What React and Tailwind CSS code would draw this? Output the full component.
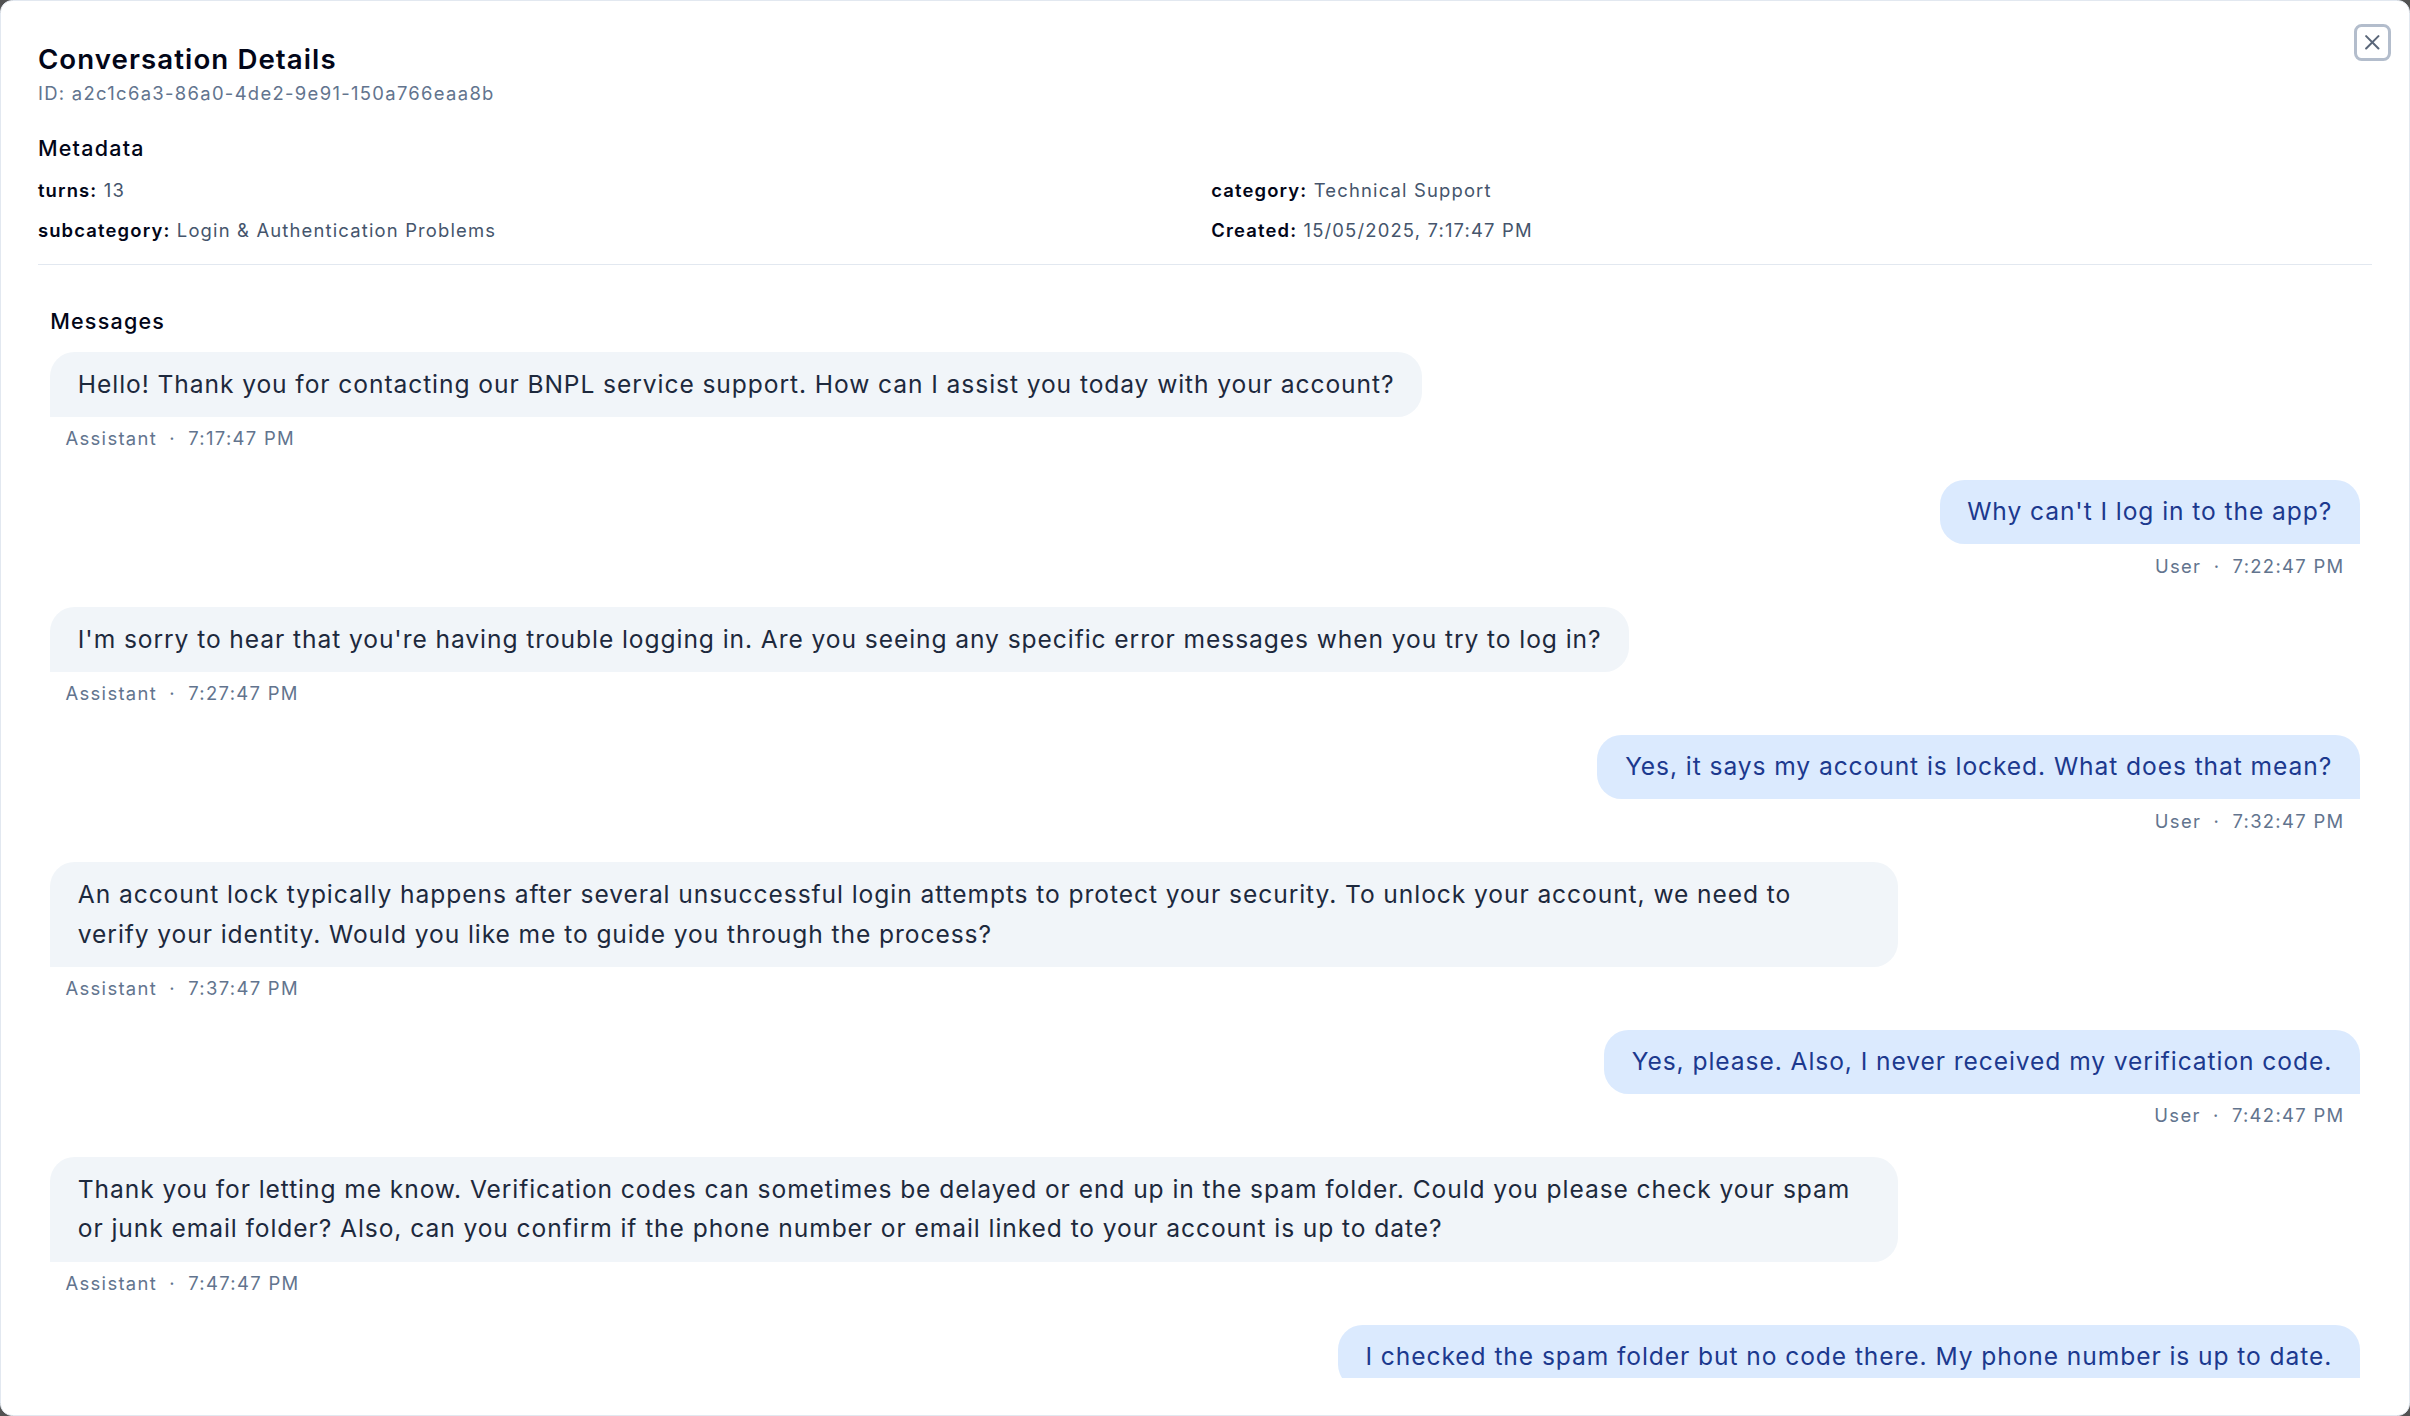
import React from "react";
import { X } from "lucide-react";

const messages = [
  {
    role: "assistant",
    text: "Hello! Thank you for contacting our BNPL service support. How can I assist you today with your account?",
    time: "7:17:47 PM",
  },
  { role: "user", text: "Why can't I log in to the app?", time: "7:22:47 PM" },
  {
    role: "assistant",
    text: "I'm sorry to hear that you're having trouble logging in. Are you seeing any specific error messages when you try to log in?",
    time: "7:27:47 PM",
  },
  {
    role: "user",
    text: "Yes, it says my account is locked. What does that mean?",
    time: "7:32:47 PM",
  },
  {
    role: "assistant",
    text: "An account lock typically happens after several unsuccessful login attempts to protect your security. To unlock your account, we need to verify your identity. Would you like me to guide you through the process?",
    time: "7:37:47 PM",
  },
  {
    role: "user",
    text: "Yes, please. Also, I never received my verification code.",
    time: "7:42:47 PM",
  },
  {
    role: "assistant",
    text: "Thank you for letting me know. Verification codes can sometimes be delayed or end up in the spam folder. Could you please check your spam or junk email folder? Also, can you confirm if the phone number or email linked to your account is up to date?",
    time: "7:47:47 PM",
  },
  {
    role: "user",
    text: "I checked the spam folder but no code there. My phone number is up to date.",
    time: "7:52:47 PM",
  },
];

const metadata = [
  { label: "turns", value: "13" },
  { label: "category", value: "Technical Support" },
  { label: "subcategory", value: "Login & Authentication Problems" },
  { label: "Created", value: "15/05/2025, 7:17:47 PM" },
];

const Message = ({ msg }) => {
  const isUser = msg.role === "user";
  return (
    <div className={`flex flex-col ${isUser ? "items-end" : "items-start"}`}>
      <div
        className={`max-w-[80%] px-[18px] py-2 text-base leading-relaxed tracking-[0.6px] rounded-2xl ${
          isUser
            ? "bg-blue-100 text-blue-900 rounded-br-none"
            : "bg-slate-100 text-slate-800 rounded-bl-none"
        }`}
      >
        {msg.text}
      </div>
      <div className="mt-1.5 px-2.5 text-xs tracking-[0.85px] text-slate-500">
        {isUser ? "User" : "Assistant"}
        <span className="mx-2">·</span>
        {msg.time}
      </div>
    </div>
  );
};

export default function App() {
  return (
    <div className="w-[1568px] h-[921.3px] [zoom:1.537] bg-neutral-600 font-['Inter','Noto_Sans',sans-serif]">
      <div className="relative flex h-full flex-col rounded-lg border border-slate-200 bg-white p-6">
        {/* Close */}
        <button className="absolute right-3 top-[15px] rounded-[5px] border-2 border-[#b3bdcc] p-0.5 bg-white">
          <X className="h-4 w-4 text-slate-700 opacity-80" strokeWidth={2} />
        </button>

        {/* Header */}
        <div>
          <h2 className="text-lg font-semibold leading-7 tracking-[0.7px] text-slate-950">
            Conversation Details
          </h2>
          <p className="text-xs tracking-[0.85px] text-slate-500">
            ID: a2c1c6a3-86a0-4de2-9e91-150a766eaa8b
          </p>
        </div>

        {/* Metadata */}
        <div className="mt-[18px] border-b border-slate-200 pb-3.5">
          <h3 className="text-sm font-medium tracking-[0.8px] text-slate-950">Metadata</h3>
          <div className="mt-[9px] grid grid-cols-2 gap-x-2 gap-y-2.5 text-xs tracking-[0.75px]">
            {metadata.map((m) => (
              <div key={m.label}>
                <span className="font-semibold text-slate-950">{m.label}:</span>{" "}
                <span className="text-slate-600">{m.value}</span>
              </div>
            ))}
          </div>
        </div>

        {/* Messages */}
        <div className="mt-[19px] flex-1 overflow-hidden p-2">
          <h3 className="mb-2.5 text-sm font-medium tracking-[0.8px] text-slate-950">Messages</h3>
          <div className="flex flex-col gap-[19px]">
            {messages.map((msg, idx) => (
              <Message key={idx} msg={msg} />
            ))}
          </div>
        </div>
      </div>
    </div>
  );
}
